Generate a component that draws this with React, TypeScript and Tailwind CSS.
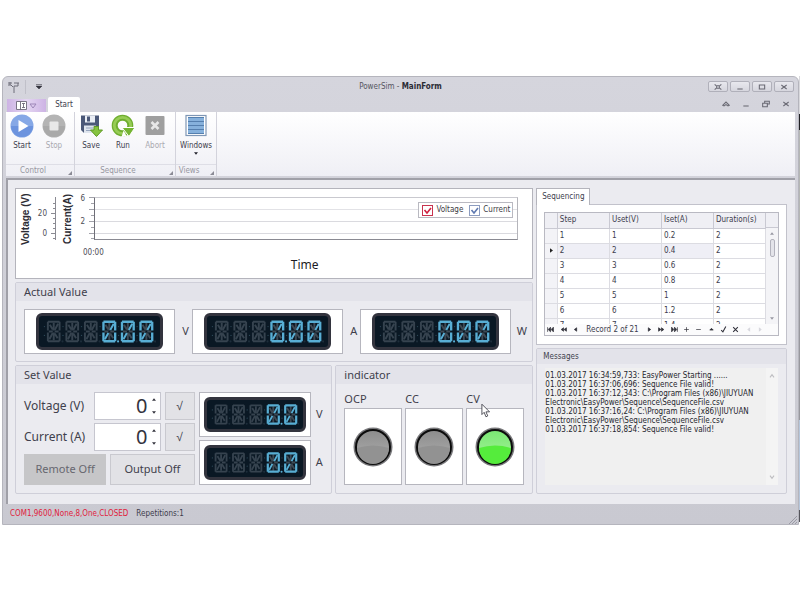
import React, { useState } from 'react';

type IconProps = { className?: string };

const GRID_ROWS = [
  [1, 1, '0.2', 2],
  [2, 2, '0.4', 2],
  [3, 3, '0.6', 2],
  [4, 4, '0.8', 2],
  [5, 5, '1', 2],
  [6, 6, '1.2', 2],
  [7, 7, '1.4', 2],
];

const MESSAGES = [
  '01.03.2017 16:34:59,733: EasyPower Starting ......',
  '01.03.2017 16:37:06,696: Sequence File valid!',
  '01.03.2017 16:37:12,343: C:\\Program Files (x86)\\JIUYUAN Electronic\\EasyPower\\Sequence\\SequenceFile.csv',
  '01.03.2017 16:37:16,24: C:\\Program Files (x86)\\JIUYUAN Electronic\\EasyPower\\Sequence\\SequenceFile.csv',
  '01.03.2017 16:37:18,854: Sequence File valid!',
];

// one cell of the display, 14 x 22 units
const FRAME = 'M1 1H7M7 1H13M13 1V10M13 12V21M13 21H7M7 21H1M1 21V12M1 10V1';
const INNER = 'M2 11H6M8 11H12M7 2V10M7 12V20M3 4L6 9M11 18L8 13';
const SLASH = 'M11.5 3L8 9.5M2.5 19L6 12.5';

function Cell({ x, lit, dot }: { x: number; lit: boolean; dot: boolean }) {
  return (
    <g transform={`translate(${x} 0)`} fill="none" strokeWidth="2">
      <path d={INNER} stroke={lit ? '#3f4a55' : '#36434f'} />
      <path d={FRAME} stroke={lit ? '#58aed4' : '#36434f'} strokeWidth={lit ? 2.4 : 2} />
      <path d={SLASH} stroke={lit ? '#58aed4' : '#36434f'} />
      <circle cx="-2.5" cy="6" r="0.7" fill="#2a4655" />
      <circle cx="-2.5" cy="15" r="0.7" fill="#2a4655" />
      <circle cx="16" cy="21.2" r="1.1" fill={dot ? '#58aed4' : '#1d2d3a'} />
    </g>
  );
}

function SegmentDisplay({ label, cells, lit, dotAt }: { label: string; cells: number; lit: number; dotAt: number }) {
  return (
    <div className="flex h-full w-full rounded-md border-[3px] border-[#33343e] bg-[#0a1824] px-1 py-[3px]">
      <svg
        role="img"
        aria-label={label}
        viewBox={`-4 -1 ${cells * 19 + 2} 24`}
        className="h-full w-full"
      >
        {Array.from({ length: cells }, (_, i) => (
          <Cell key={i} x={i * 19} lit={i >= cells - lit} dot={i === dotAt} />
        ))}
      </svg>
    </div>
  );
}

function PlayIcon({ className }: IconProps) {
  return (
    <svg viewBox="0 0 24 24" className={className}>
      <circle cx="12" cy="12" r="11.5" fill="#86a8e6" />
      <path d="M1 12a11 11 0 0 0 22 0z" fill="#6c93de" />
      <path d="M8.5 6L18.5 12L8.5 18z" fill="#fff" />
    </svg>
  );
}

function StopIcon({ className }: IconProps) {
  return (
    <svg viewBox="0 0 24 24" className={className}>
      <circle cx="12" cy="12" r="11.5" fill="#b4b4b4" />
      <path d="M1 12a11 11 0 0 0 22 0z" fill="#a9a9a9" />
      <rect x="7.5" y="7.5" width="9" height="9" rx="1" fill="#e8e8e8" />
    </svg>
  );
}

function SaveIcon({ className }: IconProps) {
  return (
    <svg viewBox="0 0 24 24" className={className}>
      <path d="M2 1.5H20V19H5L2 16z" fill="#4b5878" />
      <rect x="6" y="1.5" width="10" height="7" fill="#e9edf4" />
      <rect x="8" y="2.5" width="3" height="5" fill="#4b5878" />
      <rect x="5" y="11.5" width="12" height="7.5" fill="#dfe5ee" />
      <path d="M7 14H14M7 16.5H12" stroke="#97a5bd" />
      <path d="M15 12.5H19.5V16H23.5L17.5 22.5L11.5 16H15z" fill="#86c340" stroke="#5f9a25" />
    </svg>
  );
}

function RunIcon({ className }: IconProps) {
  return (
    <svg viewBox="0 0 24 24" className={className}>
      <circle cx="11.5" cy="11.5" r="7.8" fill="none" stroke="#6fae30" strokeWidth="6" />
      <circle cx="11.5" cy="11.5" r="8.2" fill="none" stroke="#97cc55" strokeWidth="2.8" />
      <path d="M11 13.5H24L18 22.5z" fill="#74b432" stroke="#fff" strokeWidth="1" />
      <path d="M10.5 23L12.5 16.5L15.5 22z" fill="#fff" />
    </svg>
  );
}

function AbortIcon({ className }: IconProps) {
  return (
    <svg viewBox="0 0 24 24" className={className}>
      <rect x="2.5" y="2" width="19" height="19" rx="1" fill="#9f9f9f" />
      <path d="M8.5 8L15.5 15M15.5 8L8.5 15" stroke="#e8e8e8" strokeWidth="2.6" />
    </svg>
  );
}

function WindowsIcon({ className }: IconProps) {
  return (
    <svg viewBox="0 0 24 24" className={className}>
      <rect x="2" y="1.5" width="20" height="20" fill="#fff" stroke="#7f97b5" strokeWidth="1.2" />
      <rect x="4" y="3.5" width="16" height="16" fill="#86b1dc" />
      <path d="M4 3.5H20M4 7.5H20M4 11.5H20M4 15.5H20M4 19.5H20" stroke="#557fae" strokeWidth="1" />
    </svg>
  );
}

function Arrow({ className, up }: IconProps & { up?: boolean }) {
  return (
    <svg viewBox="0 0 6 4" className={className}>
      <path d={up ? 'M0 4L3 0L6 4z' : 'M0 0H6L3 4z'} fill="currentColor" />
    </svg>
  );
}

function Glyph({ d, className }: { d: string; className?: string }) {
  return (
    <svg viewBox="0 0 12 12" className={className ?? 'h-2 w-2'} fill="none" stroke="#6a6a74" strokeWidth="1.6">
      <path d={d} />
    </svg>
  );
}

function RibbonButton({ label, disabled, children }: { label: string; disabled?: boolean; children: React.ReactNode }) {
  return (
    <button
      type="button"
      disabled={disabled}
      className="flex min-w-8 flex-col items-center text-[#3c3c4c] disabled:text-[#a9a9b0]"
    >
      {children}
      <span className="mt-0.5 leading-3">{label}</span>
    </button>
  );
}

function RibbonGroup({ title, children }: { title: string; children: React.ReactNode }) {
  return (
    <section className="flex flex-col border-r border-[#d3d3dc]">
      <div className="flex flex-1 items-start pt-0.5 pr-1">{children}</div>
      <div className="flex h-3 items-center border-t border-[#dedee6] pr-0.5 text-[#9696a0]">
        <span className="flex-1 pr-2 text-center">{title}</span>
        <svg viewBox="0 0 4 4" className="mt-1 h-1 w-1">
          <path d="M4 0V4H0z" fill="#8b8b95" />
        </svg>
      </div>
    </section>
  );
}

const CAPTION_BUTTONS = [
  { name: 'Full screen', d: 'M1 2L3 4M11 2L9 4M1 10L3 8M11 10L9 8M4 4H8V8H4z' },
  { name: 'Minimize', d: 'M2 9H10' },
  { name: 'Maximize', d: 'M2 3H10V9H2z' },
  { name: 'Close', d: 'M2 3L10 9M10 3L2 9' },
];

const CHILD_BUTTONS = [
  { name: 'Collapse ribbon', d: 'M1 8L6 3L11 8L9 9L6 7L3 9z' },
  { name: 'Minimize child', d: 'M2 9H10' },
  { name: 'Restore child', d: 'M4 5V2H11V6H8M1 5H8V10H1z' },
  { name: 'Close child', d: 'M2 3L10 9M10 3L2 9' },
];

function TitleBar() {
  return (
    <header className="flex h-[19px] items-center pr-1 pl-1">
      <div className="flex flex-1 items-center gap-1.5">
        <svg viewBox="0 0 12 12" className="h-3 w-3" fill="none" stroke="#6c6c78">
          <path d="M1 2H5M7 2H12M1 4H4L6 6M11 2V5H7M7 5V12M3 1V4" />
        </svg>
        <span className="h-3.5 w-px bg-[#c0c0c9]" />
        <button type="button" aria-label="Customize toolbar" className="ml-1 text-[#33333d]">
          <svg viewBox="0 0 6 6" className="h-1.5 w-1.5">
            <path d="M0 0.5H6M0 2H6L3 5z" fill="currentColor" stroke="currentColor" strokeWidth="0.5" />
          </svg>
        </button>
      </div>
      <h1 className="text-[#55555f]">
        PowerSim - <b className="text-[#2b2b35]">MainForm</b>
      </h1>
      <div className="flex flex-1 justify-end gap-0.5">
        {CAPTION_BUTTONS.map(b => (
          <button
            key={b.name}
            type="button"
            aria-label={b.name}
            className="flex h-[11px] w-5 items-center justify-center rounded-xs border border-[#b0b0ba] bg-linear-to-b from-[#e8e8ee] to-[#d6d6de]"
          >
            <Glyph d={b.d} />
          </button>
        ))}
      </div>
    </header>
  );
}

function TabRow() {
  return (
    <nav className="flex h-4 items-end pl-1">
      <button
        type="button"
        aria-label="Application menu"
        className="flex h-[13px] w-[39px] items-center justify-center gap-0.5 bg-linear-to-r from-[#cdb3e4] via-[#e4d6f2] to-[#cdb3e4]"
      >
        <svg viewBox="0 0 11 9" className="h-[9px] w-[11px]" fill="#fff" stroke="#6d6878" strokeWidth="0.9">
          <path d="M0.5 0.5H10.5V8.5H0.5zM4.5 0.5V8.5M6 2.5H9M7.5 2.5V6.5M6 6.5H9" />
        </svg>
        <svg viewBox="0 0 8 6" className="h-1.5 w-2" fill="none" stroke="#9d86b8">
          <path d="M1 1H7L4 5z" />
        </svg>
      </button>
      <button type="button" className="ml-0.5 h-[15px] w-8 rounded-t-xs bg-white text-[#3c3c4c]">
        Start
      </button>
      <div className="flex flex-1 items-center justify-end gap-3 self-stretch pr-2">
        {CHILD_BUTTONS.map(b => (
          <button key={b.name} type="button" aria-label={b.name}>
            <Glyph d={b.d} />
          </button>
        ))}
      </div>
    </nav>
  );
}

function Ribbon() {
  return (
    <div className="mx-[3px] flex h-16 bg-linear-to-b from-white to-[#efeff5]">
      <RibbonGroup title="Control">
        <RibbonButton label="Start"><PlayIcon className="h-6 w-6" /></RibbonButton>
        <RibbonButton label="Stop" disabled><StopIcon className="h-6 w-6" /></RibbonButton>
      </RibbonGroup>
      <RibbonGroup title="Sequence">
        <RibbonButton label="Save"><SaveIcon className="h-6 w-6" /></RibbonButton>
        <RibbonButton label="Run"><RunIcon className="h-6 w-6" /></RibbonButton>
        <RibbonButton label="Abort" disabled><AbortIcon className="h-6 w-6" /></RibbonButton>
      </RibbonGroup>
      <RibbonGroup title="Views">
        <div className="flex flex-col items-center pl-1">
          <RibbonButton label="Windows"><WindowsIcon className="h-6 w-6" /></RibbonButton>
          <Arrow className="h-[3px] w-1 text-[#22222c]" />
        </div>
      </RibbonGroup>
    </div>
  );
}

function Legend({ label, box, tick }: { label: string; box: string; tick: string }) {
  const [on, setOn] = useState(true);
  return (
    <label className="flex items-center gap-[3px]">
      <span className="grid">
        <input
          type="checkbox"
          checked={on}
          onChange={e => setOn(e.target.checked)}
          className={`col-start-1 row-start-1 h-[11px] w-[11px] appearance-none border bg-white ${box}`}
        />
        {on && (
          <svg viewBox="0 0 11 11" className={`pointer-events-none col-start-1 row-start-1 h-[11px] w-[11px] ${tick}`}>
            <path d="M2.5 5L5 8L9 3" fill="none" stroke="currentColor" strokeWidth="1.6" />
          </svg>
        )}
      </span>
      {label}
    </label>
  );
}

function Chart() {
  return (
    <section className="flex h-[91px] flex-col border border-[#b4b4bc] bg-white pr-3.5">
      <div className="flex h-[62px]">
        <svg viewBox="0 0 78 62" className="h-[62px] w-[78px] shrink-0" fill="#2c2c34">
          <g className="font-['Liberation_Sans',sans-serif]" fontSize="10" fontWeight="bold">
            <text transform="translate(13 56) rotate(-90)">Voltage (V)</text>
            <text transform="translate(55 55) rotate(-90)">Current(A)</text>
          </g>
          <g fontSize="8" fill="#4c4c55" textAnchor="end">
            <text x="31" y="27">20</text>
            <text x="31" y="47">0</text>
            <text x="69" y="12">6</text>
            <text x="69" y="35">2</text>
          </g>
          <path d="M39.5 8V51M35 24.5H39M35 44.5H39M37 14.5H39M37 19.5H39M37 29.5H39M37 34.5H39M37 39.5H39M37 49.5H39" stroke="#8a8a92" fill="none" />
          <path d="M73 8.5H78M73 20.5H78M73 32.5H78M73 44.5H78M75 14.5H78M75 26.5H78M75 38.5H78M75 49.5H78" stroke="#a2a2aa" fill="none" />
        </svg>
        <div className="relative mt-2 h-[43px] flex-1 border border-t-[#c9c9cf] border-r-[#b5b5bb] border-b-[#8a8a92] border-l-[#6f6f78]">
          <div className="flex h-full flex-col">
            <div className="h-3 border-b border-[#e2e2e6]" />
            <div className="h-3 border-b border-[#dadadf]" />
            <div className="h-3 border-b border-[#dadadf]" />
          </div>
          <div className="absolute top-1 right-1 flex h-4 items-center gap-1.5 border border-[#b9b9c1] bg-white pr-0.5 pl-[3px] text-[#3c3c44]">
            <Legend label="Voltage" box="border-[#c8334f]" tick="text-[#d0203f]" />
            <Legend label="Current" box="border-[#8c9cc0]" tick="text-[#5e78b0]" />
          </div>
        </div>
      </div>
      <div className="-mt-1 pl-[67px] leading-3 text-[#4c4c55]">00:00</div>
      <div className="pl-[75px] text-center font-['Noto_Sans',sans-serif] text-[12px] leading-3 text-[#1c1c24]">Time</div>
    </section>
  );
}

function Panel({ title, className, children }: { title: string; className?: string; children: React.ReactNode }) {
  return (
    <section className={`flex flex-col rounded-xs border border-[#cfcfd9] font-['Noto_Sans',sans-serif] text-[#3f3f4c] ${className ?? ''}`}>
      <h2 className="h-[18px] bg-[#e3e3ea] px-2 text-[11px] leading-[18px]">{title}</h2>
      {children}
    </section>
  );
}

function Readout({ unit }: { unit: string }) {
  return (
    <div className="flex flex-1 items-center">
      <div className="flex h-[45px] flex-1 border border-[#b6b6be] bg-white px-[11px] py-[3px]">
        <SegmentDisplay label="0.00" cells={6} lit={3} dotAt={3} />
      </div>
      <span className="w-[17px] pl-1 text-center text-[11px]">{unit}</span>
    </div>
  );
}

function SetField({ label, id }: { label: string; id: string }) {
  const [value, setValue] = useState(0);
  return (
    <div className="flex items-stretch">
      <label htmlFor={id} className="flex w-[70px] items-center text-[12px]">{label}</label>
      <div className="flex h-7 flex-1 items-center border border-[#c6c6cf] bg-white pr-1">
        <input
          id={id}
          value={value}
          onChange={e => setValue(Number(e.target.value) || 0)}
          className="w-full min-w-0 pr-1 text-right text-[20px] leading-6 text-[#33333d] outline-none"
        />
        <div className="flex flex-col gap-2.5 text-[#33333d]">
          <button type="button" aria-label={`Increase ${label}`} onClick={() => setValue(value + 1)}>
            <Arrow up className="h-[3px] w-1" />
          </button>
          <button type="button" aria-label={`Decrease ${label}`} onClick={() => setValue(Math.max(0, value - 1))}>
            <Arrow className="h-[3px] w-1" />
          </button>
        </div>
      </div>
      <button
        type="button"
        aria-label={`Apply ${label}`}
        className="ml-1 w-[30px] border border-[#c9c9cf] bg-[#e2e2e6] text-[12px]"
      >
        √
      </button>
    </div>
  );
}

function Lamp({ on }: { on?: boolean }) {
  const id = on ? 'lampOn' : 'lampOff';
  return (
    <svg viewBox="0 0 40 40" className="h-10 w-10">
      <defs>
        <linearGradient id={id} x1="0" y1="0" x2="0" y2="1">
          <stop offset="0" stopColor={on ? '#7be874' : '#8d8d8d'} />
          <stop offset="1" stopColor={on ? '#a6f29c' : '#b0b0b0'} />
        </linearGradient>
      </defs>
      <circle cx="20" cy="20" r="19.5" fill="#77777a" />
      <circle cx="20" cy="20" r="18" fill="#0c0c0c" />
      <circle cx="20" cy="20" r="16" fill={`url(#${id})`} />
      <path d="M4 21Q20 16 36 21A16 16 0 0 1 4 21z" fill={on ? '#55ec3c' : '#929292'} />
    </svg>
  );
}

function Indicator({ label, on }: { label: string; on?: boolean }) {
  return (
    <div className="flex flex-1 flex-col">
      <span className="text-[11px] leading-[14px]">{label}</span>
      <div className="mt-0.5 flex flex-1 items-center justify-center border border-[#b6b6be] bg-white">
        <Lamp on={on} />
      </div>
    </div>
  );
}

const NAV_BEFORE = [
  { name: 'First', d: 'M1 2V10M6 2V10L2 6zM11 2V10L7 6z' },
  { name: 'Previous page', d: 'M6 3V9L2 6zM11 3V9L7 6z' },
  { name: 'Previous', d: 'M8 3V9L4 6z' },
];
const NAV_AFTER = [
  { name: 'Next', d: 'M4 3V9L8 6z' },
  { name: 'Next page', d: 'M1 3V9L5 6zM6 3V9L10 6z' },
  { name: 'Last', d: 'M1 2V10L5 6zM6 2V10L10 6zM11 2V10' },
  { name: 'Append', d: 'M6 2V10M2 6H10' },
  { name: 'Delete', d: 'M2 6H10' },
  { name: 'Edit', d: 'M3 7L6 4L9 7z' },
];
const NAV_EDIT = [
  { name: 'End edit', d: 'M2 7L5 10L10 1' },
  { name: 'Cancel edit', d: 'M2 2L10 10M10 2L2 10' },
];

function NavButton({ name, d, faded, outline }: { name: string; d: string; faded?: boolean; outline?: boolean }) {
  return (
    <button type="button" aria-label={name} disabled={faded} className="text-[#30303a] disabled:text-[#d3d3da]">
      <svg
        viewBox="0 0 12 12"
        className="h-[7px] w-[7px]"
        fill={outline ? 'none' : 'currentColor'}
        stroke="currentColor"
        strokeWidth={outline ? 1.8 : 1.2}
      >
        <path d={d} />
      </svg>
    </button>
  );
}

function Sequencing() {
  return (
    <section className="flex flex-col">
      <button type="button" className="relative z-10 -mb-px h-[17px] w-[54px] border border-b-0 border-[#b4b4bc] bg-white text-[#3c3c4c]">
        Sequencing
      </button>
      <div className="border border-[#c2c2cb] bg-white px-[7px] pt-[7px] pb-2">
        <div className="border border-[#b9b9c2]">
          <div className="flex h-[111px] overflow-hidden">
            <div className="min-w-0 flex-1">
              <table className="w-full table-fixed border-collapse text-[#3c3c4c]">
                <thead>
                  <tr className="h-[15px] bg-[#efeff4] text-left">
                    <th className="w-3 border-r border-b border-[#c9c9d2]" aria-label="Marker" />
                    <th className="border-r border-b border-[#c9c9d2] pl-0.5 font-normal">Step</th>
                    <th className="border-r border-b border-[#c9c9d2] pl-0.5 font-normal">Uset(V)</th>
                    <th className="border-r border-b border-[#c9c9d2] pl-0.5 font-normal">Iset(A)</th>
                    <th className="border-r border-b border-[#c9c9d2] pl-0.5 font-normal">Duration(s)</th>
                  </tr>
                </thead>
                <tbody>
                  {GRID_ROWS.map((row, i) => (
                    <tr key={i} className={i === 1 ? 'h-[15px] bg-[#efeff6]' : 'h-[15px]'}>
                      <td className="border-r border-b border-[#dcdce2] bg-[#f3f3f7]">
                        {i === 1 && (
                          <svg viewBox="0 0 4 6" className="mx-auto h-[5px] w-[3px]">
                            <path d="M0 0L4 3L0 6z" fill="#222" />
                          </svg>
                        )}
                      </td>
                      {row.map((cell, j) => (
                        <td
                          key={j}
                          className={`border-r border-b border-[#dcdce2] pl-0.5 leading-3 ${j === 3 ? 'bg-white' : ''}`}
                        >
                          {cell}
                        </td>
                      ))}
                    </tr>
                  ))}
                </tbody>
              </table>
            </div>
            <div className="flex w-3 flex-col bg-[#f4f4f7]">
              <div className="h-[15px] border-b border-[#c9c9d2] bg-[#efeff4]" />
              <div className="flex flex-1 flex-col items-center py-1 text-[#9999a3]">
                <Arrow up className="h-[3px] w-1" />
                <div className="mt-1 h-[18px] w-[5px] rounded-xs border border-[#b3b3bd] bg-[#e4e4ea]" />
                <div className="flex-1" />
                <Arrow className="h-[3px] w-1" />
              </div>
            </div>
          </div>
          <div className="flex h-[11px] items-center justify-between bg-[#fbfbfc] pr-3.5 pl-0.5">
            {NAV_BEFORE.map(n => <NavButton key={n.name} {...n} />)}
            <span className="px-0.5 text-[#3c3c4c]">Record 2 of 21</span>
            {NAV_AFTER.map(n => <NavButton key={n.name} {...n} />)}
            {NAV_EDIT.map(n => <NavButton key={n.name} {...n} outline />)}
            <NavButton name="Previous match" d="M8 3V9L5 6z" faded />
            <NavButton name="Next match" d="M4 3V9L7 6z" faded />
          </div>
        </div>
      </div>
    </section>
  );
}

function Messages() {
  return (
    <section className="mt-[3px] flex flex-1 flex-col rounded-xs border border-[#cfcfd9]">
      <h2 className="h-[15px] bg-[#e3e3ea] px-1.5 leading-[15px] text-[#3f3f4c]">Messages</h2>
      <div className="m-2 mt-1 flex flex-1 bg-[#f0f0f0]">
        <div className="flex-1 pt-[3px] leading-[9px] text-[#26262e]">
          {MESSAGES.map(m => <p key={m}>{m}</p>)}
        </div>
        <div className="flex w-3 flex-col items-center justify-between bg-[#f4f4f4] py-1">
          <Glyph d="M3 8L6 4L9 8" className="h-2 w-2 opacity-40" />
          <Glyph d="M3 4L6 8L9 4" className="h-2 w-2 opacity-40" />
        </div>
      </div>
    </section>
  );
}

function StatusBar() {
  return (
    <footer className="flex h-5 items-center gap-2 pl-[7px] text-[#3c3c4c]">
      <span className="text-[#e0213c]">COM1,9600,None,8,One,CLOSED</span>
      <span className="flex-1">Repetitions:1</span>
      <svg viewBox="0 0 8 8" className="mr-px h-2 w-2 self-end" stroke="#9a9aa4">
        <path d="M0 8L8 0M3 8L8 3M6 8L8 6" />
      </svg>
    </footer>
  );
}

export default function App() {
  return (
    <div className="flex min-h-screen items-start bg-white pt-[76px] font-['DejaVu_Sans_Condensed','DejaVu_Sans',sans-serif] text-[8px]">
      <div className="ml-0.5 min-w-0 flex-1 rounded-t-md border border-[#b5b5bd] bg-linear-to-b from-[#d5d5dd] to-[#c9c9d1]">
        <TitleBar />
        <TabRow />
        <Ribbon />
        <main className="mx-[3px] mt-0.5 flex gap-[3px] border-t-2 border-l-2 border-[#a0a0a8] bg-[#ebebf0] pt-2 pr-2 pb-2.5 pl-[7px]">
          <div className="flex flex-[517] flex-col gap-[3px]">
            <Chart />
            <Panel title="Actual Value">
              <div className="flex pt-2 pr-1 pb-[7px] pl-2">
                <Readout unit="V" />
                <Readout unit="A" />
                <Readout unit="W" />
              </div>
            </Panel>
            <div className="flex gap-[3px]">
              <Panel title="Set Value" className="flex-[317]">
                <div className="flex gap-1 py-2 pr-1 pl-2">
                  <div className="flex flex-[172] flex-col gap-[3px]">
                    <SetField label="Voltage (V)" id="voltage" />
                    <SetField label="Current (A)" id="current" />
                    <div className="flex flex-1 gap-1 text-[11px]">
                      <button type="button" className="flex-1 bg-[#c6c6c8] text-[#66666f]">Remote Off</button>
                      <button type="button" className="flex-1 border border-[#c9c9cf] bg-[#e2e2e6]">Output Off</button>
                    </div>
                  </div>
                  <div className="flex flex-[130] flex-col gap-[3px]">
                    {['V', 'A'].map(unit => (
                      <div key={unit} className="flex items-center">
                        <div className="flex h-[45px] flex-1 border border-[#b6b6be] bg-white p-1">
                          <SegmentDisplay label="0.0" cells={5} lit={2} dotAt={3} />
                        </div>
                        <span className="w-4 text-center text-[11px]">{unit}</span>
                      </div>
                    ))}
                  </div>
                </div>
              </Panel>
              <Panel title="indicator" className="flex-[197]">
                <div className="flex flex-1 gap-[3px] px-2 pt-2 pb-2">
                  <Indicator label="OCP" />
                  <Indicator label="CC" />
                  <Indicator label="CV" on />
                </div>
              </Panel>
            </div>
          </div>
          <div className="flex flex-[250] flex-col">
            <Sequencing />
            <Messages />
          </div>
        </main>
        <StatusBar />
      </div>
      {/* sliver of the desktop behind the window */}
      <div className="flex w-px flex-col self-start">
        <div className="h-[38px] bg-[#d8d8dc]" />
        <div className="h-4 bg-[#222226]" />
        <div className="h-[120px] bg-[#b4b6b4]" />
        <div className="h-[170px] bg-[#98989e]" />
        <div className="h-[90px] bg-[#b5c6dc]" />
        <div className="h-3 bg-[#55555c]" />
      </div>
      <svg viewBox="0 0 10 16" className="pointer-events-none absolute top-[403px] left-[481px] h-[15px] w-[9px]">
        <path d="M1 1V12.5L3.5 10L5.5 15L7.5 14L5.5 9.5H9.5z" fill="#fff" stroke="#33333d" strokeWidth="0.9" />
      </svg>
    </div>
  );
}
